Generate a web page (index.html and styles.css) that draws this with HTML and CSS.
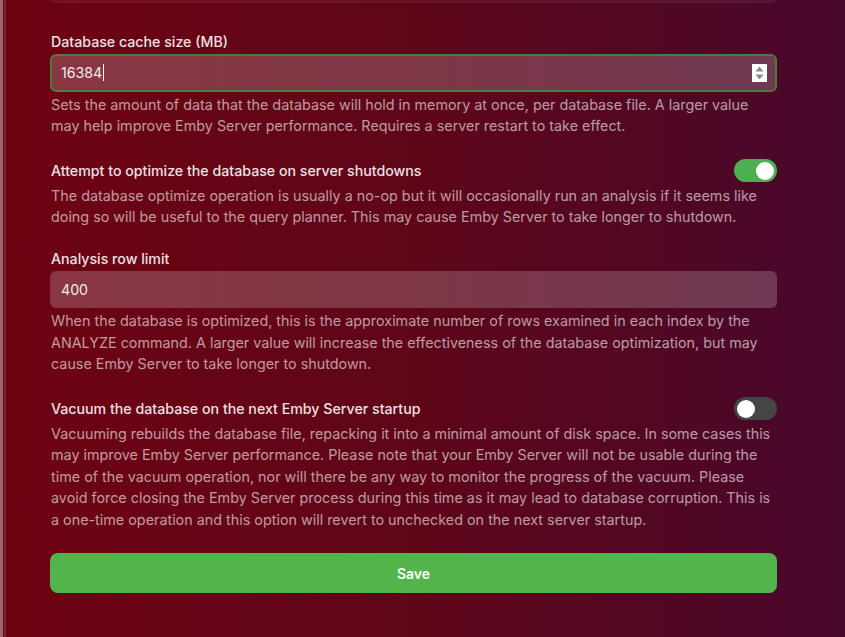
FILE: index.html
```html
<!DOCTYPE html>
<html lang="en">
<head>
<meta charset="utf-8">
<title>Database settings</title>
<link rel="stylesheet" href="styles.css">
</head>
<body>
<div class="page">
  <div class="rail"></div>
  <main class="content">
    <div class="topcard"></div>

    <section class="field f1">
      <label class="label">Database cache size (MB)</label>
      <div class="input focused">
        <span class="value">16384</span><span class="caret"></span>
        <span class="spinner">
          <svg width="15" height="16" viewBox="0 0 15 16"><path d="M7.5 1.5 L11.5 6.5 H3.5 Z" fill="#8a8a8a"/><path d="M7.5 14.5 L11.5 9.5 H3.5 Z" fill="#8a8a8a"/></svg>
        </span>
      </div>
      <p class="desc">Sets the amount of data that the database will hold in memory at once, per database file. A larger value may help improve Emby Server performance. Requires a server restart to take effect.</p>
    </section>

    <section class="field f2">
      <div class="toggle-row">
        <span class="label">Attempt to optimize the database on server shutdowns</span>
        <span class="toggle on"><span class="knob"></span></span>
      </div>
      <p class="desc">The database optimize operation is usually a no-op but it will occasionally run an analysis if it seems like doing so will be useful to the query planner. This may cause Emby Server to take longer to shutdown.</p>
    </section>

    <section class="field f3">
      <label class="label">Analysis row limit</label>
      <div class="input plain"><span class="value">400</span></div>
      <p class="desc">When the database is optimized, this is the approximate number of rows examined in each index by the ANALYZE command. A larger value will increase the effectiveness of the database optimization, but may cause Emby Server to take longer to shutdown.</p>
    </section>

    <section class="field f4">
      <div class="toggle-row">
        <span class="label">Vacuum the database on the next Emby Server startup</span>
        <span class="toggle off"><span class="knob"></span></span>
      </div>
      <p class="desc">Vacuuming rebuilds the database file, repacking it into a minimal amount of disk space. In some cases this may improve Emby Server performance. Please note that your Emby Server will not be usable during the time of the vacuum operation, nor will there be any way to monitor the progress of the vacuum. Please avoid force closing the Emby Server process during this time as it may lead to database corruption. This is a one-time operation and this option will revert to unchecked on the next server startup.</p>
    </section>

    <button class="save">Save</button>
  </main>
</div>
</body>
</html>
```

FILE: styles.css
```css
* { box-sizing: border-box; }
html, body { margin: 0; padding: 0; height: 100%; }
body {
  font-family: Inter, "Noto Sans", sans-serif;
  font-size: 14px;
  color: #f2e8ea;
  background: linear-gradient(to right, #6e0412 0%, #5e0619 50%, #48082c 100%);
  overflow: hidden;
}
.page {
  display: flex;
  height: 637px;
}
.rail {
  width: 6px;
  flex: none;
  background: #9a6a72;
  border-right: 2px solid #7c2430;
  box-shadow: inset -1px 0 0 #6e0412;
}
.content {
  width: 727px;
  margin-left: 44px;
  display: flex;
  flex-direction: column;
}
.topcard {
  height: 3px;
  margin: 0 1px 0 1px;
  background: rgba(255, 255, 255, 0.06);
  border-radius: 0 0 5px 5px;
}
.field { display: flex; flex-direction: column; }
.f1 { margin-top: 28px; }
.f2 { margin-top: 22px; }
.f3 { margin-top: 20px; }
.f4 { margin-top: 22px; }
.label {
  font-weight: 500;
  font-size: 14.2px;
  line-height: 21.5px;
  color: #ece0e3;
  padding-left: 1px;
}
.input {
  position: relative;
  display: flex;
  align-items: center;
  background: rgba(255, 255, 255, 0.2);
  border-radius: 6px;
  padding: 0 11px;
  font-size: 14.2px;
  color: #f3eaec;
}
.input.focused {
  height: 38px;
  margin-top: 1px;
  border: 2px solid #4e7b3c;
  padding-left: 9px;
}
.input.plain {
  height: 37px;
  margin-top: 2px;
}
.caret {
  display: inline-block;
  width: 1px;
  height: 17px;
  background: #ffffff;
  margin-left: 1px;
}
.spinner {
  position: absolute;
  right: 8px;
  top: 8px;
  width: 15px;
  height: 18px;
  background: #ffffff;
  display: flex;
  align-items: center;
  justify-content: center;
}
.desc {
  margin: 2px 0 0 0;
  font-size: 14.35px;
  line-height: 21.5px;
  color: rgba(255, 255, 255, 0.6);
  padding-left: 1px;
}
.toggle-row {
  display: flex;
  align-items: center;
  justify-content: space-between;
  height: 24px;
}
.toggle {
  width: 43px;
  height: 23px;
  border-radius: 12px;
  display: flex;
  align-items: center;
  padding: 0 3px;
}
.toggle.on { background: #4caf50; justify-content: flex-end; }
.toggle.off { background: #454545; justify-content: flex-start; }
.knob {
  width: 18px;
  height: 18px;
  border-radius: 50%;
  background: #ffffff;
}
.save {
  margin-top: 23px;
  height: 40px;
  border: none;
  border-radius: 8px;
  background: #52b54b;
  color: #ffffff;
  font-family: Inter, "Noto Sans", sans-serif;
  font-weight: 600;
  font-size: 14px;
}
```
